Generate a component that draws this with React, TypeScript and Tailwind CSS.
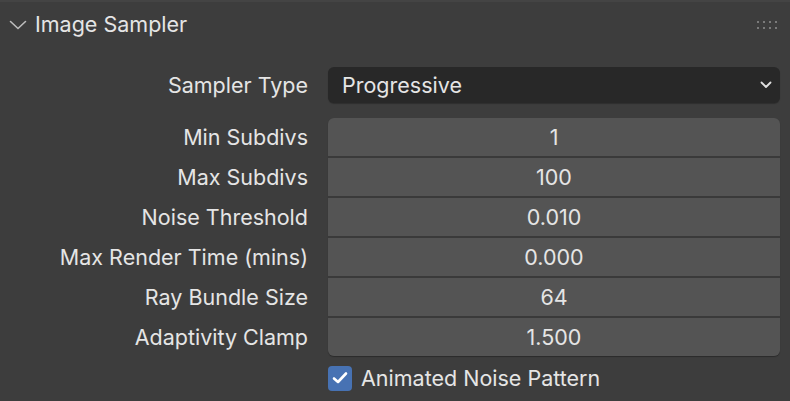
const fields = [
  { label: 'Min Subdivs', value: '1' },
  { label: 'Max Subdivs', value: '100' },
  { label: 'Noise Threshold', value: '0.010' },
  { label: 'Max Render Time (mins)', value: '0.000' },
  { label: 'Ray Bundle Size', value: '64' },
  { label: 'Adaptivity Clamp', value: '1.500' },
]

const GripDots = () => (
  <svg width="24" height="10" viewBox="0 0 24 10" className="text-[#7a7a7a]">
    {[0, 6, 12, 18].map((x) =>
      [0, 6].map((y) => <rect key={`${x}-${y}`} x={x + 1} y={y + 1} width="2" height="2" fill="currentColor" />)
    )}
  </svg>
)

export default function App() {
  return (
    <div className="w-[790px] h-[401px] bg-[#3d3d3d] border-t-2 border-[#444444] text-[#e5e5e5] font-['Inter','Noto_Sans',sans-serif] text-[21.5px] leading-[28px] overflow-hidden">
      {/* panel header */}
      <div className="flex items-center h-[46px] pl-[9px] pr-[10px]">
        <svg width="18" height="10" viewBox="0 0 18 10" fill="none" stroke="#bdbdbd" strokeWidth="1.6" strokeLinecap="round">
          <path d="M1.5 1.5 L9 8.5 L16.5 1.5" />
        </svg>
        <span className="ml-[8px] leading-none">Image Sampler</span>
        <div className="ml-auto">
          <GripDots />
        </div>
      </div>

      {/* sampler type */}
      <div className="flex items-center mt-[19px] pr-[10px]">
        <div className="w-[308px] text-right">Sampler Type</div>
        <div className="ml-[20px] flex-1 h-[36px] rounded-[6px] bg-[#282828] flex items-center pl-[14px] pr-[8px] shadow-[0_1px_1px_rgba(0,0,0,0.25)]">
          <span>Progressive</span>
          <svg className="ml-auto" width="12" height="8" viewBox="0 0 12 8" fill="none" stroke="#e0e0e0" strokeWidth="1.8" strokeLinecap="round" strokeLinejoin="round">
            <path d="M1.5 1.5 L6 6 L10.5 1.5" />
          </svg>
        </div>
      </div>

      {/* numeric fields */}
      <div className="flex mt-[15px] pr-[10px]">
        <div className="w-[308px] flex flex-col gap-[2px]">
          {fields.map((f) => (
            <div key={f.label} className="h-[38px] flex items-center justify-end">
              {f.label}
            </div>
          ))}
        </div>
        <div className="ml-[20px] flex-1 flex flex-col gap-[2px] bg-[#3a3a3a] rounded-[6px] shadow-[0_1px_1px_rgba(0,0,0,0.3)]">
          {fields.map((f, i) => (
            <div
              key={f.label}
              className={`h-[38px] bg-[#545454] flex items-center justify-center ${i === 0 ? 'rounded-t-[6px]' : ''} ${i === fields.length - 1 ? 'rounded-b-[6px]' : ''}`}
            >
              {f.value}
            </div>
          ))}
        </div>
      </div>

      {/* checkbox */}
      <div className="flex items-center mt-[8px] pl-[328px]">
        <div className="w-[24px] h-[25px] rounded-[4px] bg-[#4772b3] flex items-center justify-center">
          <svg width="16" height="14" viewBox="0 0 16 14" fill="none" stroke="#ffffff" strokeWidth="2.6" strokeLinecap="round" strokeLinejoin="round">
            <path d="M2 7.5 L6 11 L14 2.5" />
          </svg>
        </div>
        <span className="ml-[9px]">Animated Noise Pattern</span>
      </div>
    </div>
  )
}
